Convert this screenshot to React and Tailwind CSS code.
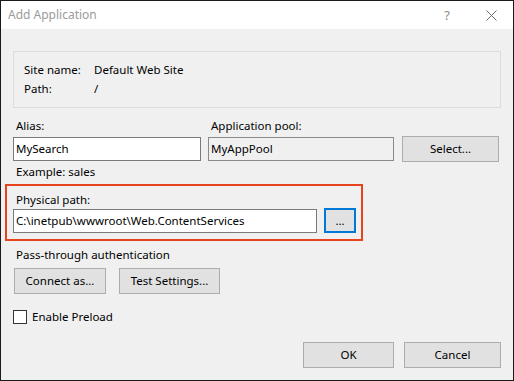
import React from 'react';

const font = { fontFamily: '"Noto Sans", "Liberation Sans", sans-serif' };

function Button({ children, className = '' }) {
  return (
    <button
      className={`flex items-center justify-center h-[26px] bg-[#e1e1e1] border border-[#adadad] text-[11.5px] text-black ${className}`}
    >
      {children}
    </button>
  );
}

function TextBox({ value, disabled = false, className = '' }) {
  return (
    <div
      className={`flex items-center h-[24px] border px-[2px] text-[11.5px] text-black ${
        disabled ? 'bg-[#f0f0f0] border-[#8a8a8a]' : 'bg-white border-[#7a7a7a]'
      } ${className}`}
    >
      {value}
    </div>
  );
}

export default function App() {
  return (
    <div
      className="w-[514px] h-[381px] flex flex-col bg-[#f0f0f0] border border-[#1a1a1a] text-[11.5px] leading-[16px] text-black select-none"
      style={font}
    >
      {/* Title bar */}
      <div className="flex items-center h-[28px] bg-white shrink-0">
        <span className="pl-[7px] text-[12px] text-[#9b9b9b]">Add Application</span>
        <span className="ml-auto w-[16px] text-center text-[13px] text-[#8a8a8a]">?</span>
        <span className="ml-[30px] mr-[16px] flex items-center justify-center w-[12px] h-[12px]">
          <svg width="11" height="11" viewBox="0 0 11 11" fill="none" stroke="#6b6b6b" strokeWidth="1">
            <path d="M0.5 0.5 L10.5 10.5 M10.5 0.5 L0.5 10.5" />
          </svg>
        </span>
      </div>

      <div className="flex flex-col flex-1 px-[12px]">
        {/* Site info group */}
        <div className="mt-[22px] border border-[#dcdcdc] pl-[10px] py-[10px] flex flex-col gap-[3px]">
          <div className="flex">
            <span className="w-[70px]">Site name:</span>
            <span>Default Web Site</span>
          </div>
          <div className="flex">
            <span className="w-[70px]">Path:</span>
            <span>/</span>
          </div>
        </div>

        {/* Alias / Application pool */}
        <div className="mt-[10px] flex items-end">
          <div className="w-[188px] flex flex-col">
            <span className="pl-[3px] mb-[3px]">Alias:</span>
            <TextBox value="MySearch" />
          </div>
          <div className="ml-[7px] w-[186px] flex flex-col">
            <span className="pl-[3px] mb-[3px]">Application pool:</span>
            <TextBox value="MyAppPool" disabled />
          </div>
          <Button className="ml-[8px] w-[97px] mb-[-1px]">Select...</Button>
        </div>
        <span className="mt-[3px] pl-[3px]">Example: sales</span>

        {/* Physical path (highlighted) */}
        <div className="mt-[4px] ml-[-8px] w-[358px] border-2 border-[#e8431f] pl-[6px] pt-[6px] pb-[6px] flex flex-col">
          <span className="pl-[3px]">Physical path:</span>
          <div className="flex items-center">
            <TextBox value={'C:\\inetpub\\wwwroot\\Web.ContentServices'} className="w-[304px]" />
            <button className="ml-[7px] w-[32px] h-[25px] flex items-center justify-center bg-[#e1e1e1] border-2 border-[#0078d7] text-[11.5px]">
              ...
            </button>
          </div>
        </div>

        {/* Pass-through authentication */}
        <span className="mt-[6px] pl-[3px]">Pass-through authentication</span>
        <div className="mt-[5px] flex">
          <Button className="ml-[1px] w-[92px]">Connect as...</Button>
          <Button className="ml-[13px] w-[101px]">Test Settings...</Button>
        </div>

        {/* Enable preload */}
        <div className="mt-[15px] flex items-center">
          <span className="w-[14px] h-[14px] border border-[#333333] bg-white" />
          <span className="ml-[5px]">Enable Preload</span>
        </div>

        {/* Dialog buttons */}
        <div className="mt-auto mb-[12px] flex justify-end">
          <Button className="w-[91px]">OK</Button>
          <Button className="ml-[10px] w-[97px]">Cancel</Button>
        </div>
      </div>
    </div>
  );
}
